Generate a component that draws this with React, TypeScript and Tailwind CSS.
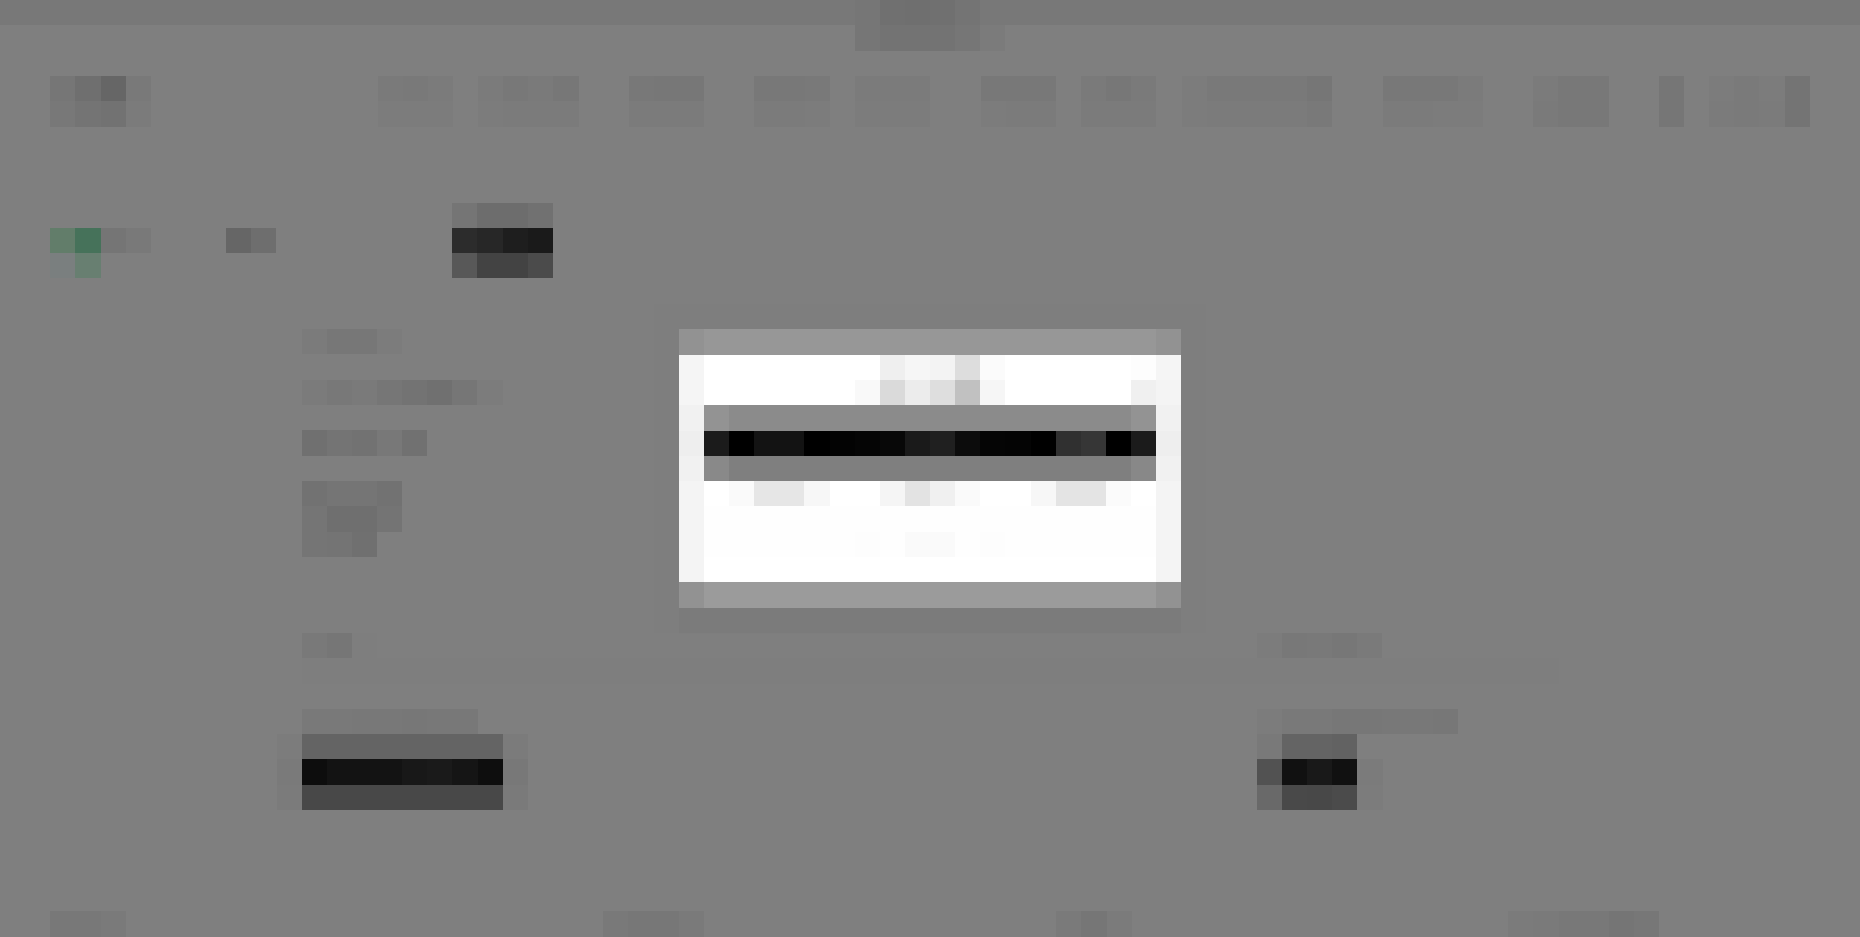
import React from 'react';

// The reference is blurred past reading, so everything is kept as the tone cells it shows, on its 25px grid.
const Line = ({ cells, className = '' }: { cells: string[]; className?: string }) => (
  <div className={`flex h-[25.32px] ${className}`}>
    {cells.map((tone, i) => (
      <div key={i} className={`w-[25.135px] shrink-0 ${tone}`} />
    ))}
  </div>
);

const fill = (count: number, tone: string) => Array<string>(count).fill(tone);

const navLinks = [
  { gap: '', top: ['bg-[#f4f4f4]', 'bg-[#f2f2f2]', 'bg-[#f6f6f6]'], bottom: ['bg-[#f8f8f8]', 'bg-[#f8f8f8]', 'bg-[#f8f8f8]'] },
  { gap: 'ml-[25.135px]', top: ['bg-[#f6f6f6]', 'bg-[#f0f0f0]', 'bg-[#f4f4f4]', 'bg-[#eeeeee]'], bottom: ['bg-[#f8f8f8]', 'bg-[#f6f6f6]', 'bg-[#f6f6f6]', 'bg-[#f6f6f6]'] },
  { gap: 'ml-[50.27px]', top: ['bg-[#f0f0f0]', 'bg-[#eeeeee]', 'bg-[#eeeeee]'], bottom: ['bg-[#f6f6f6]', 'bg-[#f6f6f6]', 'bg-[#f6f6f6]'] },
  { gap: 'ml-[50.27px]', top: ['bg-[#f0f0f0]', 'bg-[#f0f0f0]', 'bg-[#f2f2f2]'], bottom: ['bg-[#f6f6f6]', 'bg-[#f6f6f6]', 'bg-[#f8f8f8]'] },
  { gap: 'ml-[25.135px]', top: ['bg-[#f6f6f6]', 'bg-[#f6f6f6]', 'bg-[#f6f6f6]'], bottom: ['bg-[#f8f8f8]', 'bg-[#f8f8f8]', 'bg-[#f8f8f8]'] },
  { gap: 'ml-[50.27px]', top: ['bg-[#f0f0f0]', 'bg-[#f0f0f0]', 'bg-[#f0f0f0]'], bottom: ['bg-[#f8f8f8]', 'bg-[#f6f6f6]', 'bg-[#f6f6f6]'] },
  { gap: 'ml-[25.135px]', top: ['bg-[#f4f4f4]', 'bg-[#eeeeee]', 'bg-[#f4f4f4]'], bottom: ['bg-[#f6f6f6]', 'bg-[#f6f6f6]', 'bg-[#f6f6f6]'] },
  { gap: 'ml-[25.135px]', top: ['bg-[#f8f8f8]', 'bg-[#f2f2f2]', 'bg-[#f2f2f2]', 'bg-[#f2f2f2]', 'bg-[#f2f2f2]', 'bg-[#ececec]'], bottom: ['bg-[#f8f8f8]', 'bg-[#f6f6f6]', 'bg-[#f6f6f6]', 'bg-[#f6f6f6]', 'bg-[#f6f6f6]', 'bg-[#f2f2f2]'] },
  { gap: 'ml-[50.27px]', top: ['bg-[#f0f0f0]', 'bg-[#f0f0f0]', 'bg-[#f0f0f0]', 'bg-[#f6f6f6]'], bottom: ['bg-[#f6f6f6]', 'bg-[#f6f6f6]', 'bg-[#f8f8f8]', 'bg-[#f8f8f8]'] },
  { gap: 'ml-[50.27px]', top: ['bg-[#f6f6f6]', 'bg-[#f0f0f0]', 'bg-[#f0f0f0]'], bottom: ['bg-[#f4f4f4]', 'bg-[#f0f0f0]', 'bg-[#f0f0f0]'] },
  { gap: 'ml-[50.27px]', top: ['bg-[#ececec]'], bottom: ['bg-[#ececec]'] },
  { gap: 'ml-[25.135px]', top: ['bg-[#f8f8f8]', 'bg-[#f4f4f4]', 'bg-[#f8f8f8]', 'bg-[#e8e8e8]'], bottom: ['bg-[#f6f6f6]', 'bg-[#f4f4f4]', 'bg-[#f6f6f6]', 'bg-[#e8e8e8]'] },
];

const TopBar = () => (
  <div>
    <Line
      className="justify-center bg-[#f0f0f0]"
      cells={['bg-[#ececec]', 'bg-[#e0e0e0]', 'bg-[#dedede]', 'bg-[#e0e0e0]', 'bg-[#e8e8e8]', 'bg-[#f0f0f0]']}
    />
    <Line
      className="justify-center"
      cells={['bg-[#ececec]', 'bg-[#e6e6e6]', 'bg-[#e6e6e6]', 'bg-[#e6e6e6]', 'bg-[#ececec]', 'bg-[#f6f6f6]']}
    />
  </div>
);

const Nav = () => (
  <nav className="mt-[25.32px] flex justify-between pl-[50.27px] pr-[50.27px]">
    <div>
      <Line cells={['bg-[#ececec]', 'bg-[#dedede]', 'bg-[#cccccc]', 'bg-[#f2f2f2]']} />
      <Line cells={['bg-[#f0f0f0]', 'bg-[#e8e8e8]', 'bg-[#e4e4e4]', 'bg-[#f6f6f6]']} />
    </div>
    <div className="flex">
      {navLinks.map((link, i) => (
        <div key={i} className={link.gap}>
          <Line cells={link.top} />
          <Line cells={link.bottom} />
        </div>
      ))}
    </div>
  </nav>
);

const Hero = () => (
  <section className="mt-[75.96px] flex h-[75.96px] pl-[50.27px]">
    <div className="pt-[25.32px]">
      <Line cells={['bg-[#c4fad4]', 'bg-[#8ce4b4]', 'bg-[#eaeaea]', 'bg-[#f2f2f2]']} />
      <Line cells={['bg-[#f4ffff]', 'bg-[#d0fee2]']} />
    </div>
    <div className="ml-[75.4px] pt-[25.32px]">
      <Line cells={['bg-[#cccccc]', 'bg-[#dcdcdc]']} />
    </div>
    <button className="ml-[175.9px] block">
      <Line cells={['bg-[#eaeaea]', 'bg-[#dadada]', 'bg-[#dadada]', 'bg-[#e2e2e2]']} />
      <Line cells={['bg-[#585858]', 'bg-[#4e4e4e]', 'bg-[#3c3c3c]', 'bg-[#343434]']} />
      <Line cells={['bg-[#b0b0b0]', 'bg-[#868686]', 'bg-[#868686]', 'bg-[#969696]']} />
    </button>
  </section>
);

const Details = () => (
  <section className="mt-[50.64px] pl-[301.6px]">
    <Line cells={['bg-[#f6f6f6]', 'bg-[#eeeeee]', 'bg-[#eeeeee]', 'bg-[#f8f8f8]']} />
    <Line
      className="mt-[25.32px]"
      cells={['bg-[#f6f6f6]', 'bg-[#f0f0f0]', 'bg-[#f4f4f4]', 'bg-[#ececec]', 'bg-[#e6e6e6]', 'bg-[#e0e0e0]', 'bg-[#ececec]', 'bg-[#f8f8f8]']}
    />
    <Line
      className="mt-[25.32px]"
      cells={['bg-[#e0e0e0]', 'bg-[#e8e8e8]', 'bg-[#e4e4e4]', 'bg-[#f0f0f0]', 'bg-[#e2e2e2]']}
    />
    <div className="mt-[25.32px]">
      <Line cells={['bg-[#e4e4e4]', 'bg-[#eaeaea]', 'bg-[#eaeaea]', 'bg-[#e4e4e4]']} />
      <Line cells={['bg-[#eaeaea]', 'bg-[#dedede]', 'bg-[#dedede]', 'bg-[#e8e8e8]']} />
      <Line cells={['bg-[#eaeaea]', 'bg-[#e8e8e8]', 'bg-[#e0e0e0]']} />
    </div>
  </section>
);

const Fields = () => (
  <section className="mt-[76px] pl-[276.5px] pr-[301px]">
    <div className="grid grid-cols-[955.2px_1fr] pl-[25.135px]">
      <Line cells={['bg-[#f2f2f2]', 'bg-[#ececec]', 'bg-[#fcfcfc]']} />
      <Line cells={['bg-[#f8f8f8]', 'bg-[#f0f0f0]', 'bg-[#f2f2f2]', 'bg-[#eeeeee]', 'bg-[#f4f4f4]']} />
    </div>
    <div className="ml-[25.135px] h-[25.32px] bg-[#fdfdfd]" />
    <div className="mt-[25.32px] grid grid-cols-[955.2px_1fr] pl-[25.135px]">
      <Line cells={['bg-[#f2f2f2]', 'bg-[#f2f2f2]', 'bg-[#f0f0f0]', 'bg-[#f0f0f0]', 'bg-[#eeeeee]', 'bg-[#f0f0f0]', 'bg-[#f0f0f0]']} />
      <Line cells={['bg-[#f8f8f8]', 'bg-[#f2f2f2]', 'bg-[#f2f2f2]', 'bg-[#eeeeee]', 'bg-[#eeeeee]', 'bg-[#f0f0f0]', 'bg-[#f0f0f0]', 'bg-[#eeeeee]']} />
    </div>
    <div className="grid grid-cols-[980.4px_1fr]">
      <button className="block w-fit">
        <Line cells={['bg-[#f8f8f8]', ...fill(8, 'bg-[#c8c8c8]'), 'bg-[#f6f6f6]']} />
        <Line cells={['bg-[#f4f4f4]', 'bg-[#1a1a1a]', 'bg-[#262626]', 'bg-[#262626]', 'bg-[#262626]', 'bg-[#303030]', 'bg-[#343434]', 'bg-[#2a2a2a]', 'bg-[#1c1c1c]', 'bg-[#f0f0f0]']} />
        <Line cells={['bg-[#f6f6f6]', ...fill(8, 'bg-[#909090]'), 'bg-[#f4f4f4]']} />
      </button>
      <button className="block w-fit">
        <Line cells={['bg-[#f2f2f2]', 'bg-[#c8c8c8]', 'bg-[#c8c8c8]', 'bg-[#c4c4c4]']} />
        <Line cells={['bg-[#a4a4a4]', 'bg-[#222222]', 'bg-[#323232]', 'bg-[#222222]', 'bg-[#f6f6f6]']} />
        <Line cells={['bg-[#d2d2d2]', 'bg-[#929292]', 'bg-[#909090]', 'bg-[#969696]', 'bg-[#f8f8f8]']} />
      </button>
    </div>
  </section>
);

const Footer = () => (
  <footer className="mt-[101.3px] grid grid-cols-[553px_453px_452px_1fr] pl-[50.27px]">
    <Line cells={['bg-[#f0f0f0]', 'bg-[#f0f0f0]', 'bg-[#f4f4f4]']} />
    <Line cells={['bg-[#f2f2f2]', 'bg-[#eeeeee]', 'bg-[#eeeeee]', 'bg-[#f4f4f4]']} />
    <Line cells={['bg-[#f4f4f4]', 'bg-[#ececec]', 'bg-[#f6f6f6]']} />
    <Line cells={['bg-[#f6f6f6]', 'bg-[#f4f4f4]', 'bg-[#f0f0f0]', 'bg-[#f0f0f0]', 'bg-[#eaeaea]', 'bg-[#eeeeee]']} />
  </footer>
);

const Modal = () => (
  <div className="fixed inset-0 flex items-center justify-center bg-black/50">
    <div className="shadow-[0_25.3px_0_0_rgba(0,0,0,0.03),0_0_0_25px_rgba(0,0,0,0.012)]">
      <Line cells={['bg-[#929292]', ...fill(18, 'bg-[#979797]'), 'bg-[#929292]']} />
      <Line cells={['bg-[#f5f5f5]', ...fill(7, 'bg-white'), 'bg-[#efefef]', 'bg-[#f6f6f6]', 'bg-[#f3f3f3]', 'bg-[#dddddd]', 'bg-[#fbfbfb]', ...fill(5, 'bg-white'), 'bg-[#fdfdfd]', 'bg-[#f5f5f5]']} />
      <Line cells={['bg-[#f5f5f5]', ...fill(6, 'bg-white'), 'bg-[#f9f9f9]', 'bg-[#dadada]', 'bg-[#ececec]', 'bg-[#dedede]', 'bg-[#c1c1c1]', 'bg-[#f6f6f6]', ...fill(5, 'bg-white'), 'bg-[#f0f0f0]', 'bg-[#f4f4f4]']} />
      <button className="block">
        <Line cells={['bg-[#f1f1f1]', 'bg-[#939393]', ...fill(16, 'bg-[#8b8b8b]'), 'bg-[#939393]', 'bg-[#f1f1f1]']} />
        <Line cells={['bg-[#eeeeee]', 'bg-[#1b1b1b]', 'bg-black', 'bg-[#131313]', 'bg-[#131313]', 'bg-black', 'bg-[#030303]', 'bg-[#050505]', 'bg-[#080808]', 'bg-[#1a1a1a]', 'bg-[#202020]', 'bg-[#0c0c0c]', 'bg-[#050505]', 'bg-[#040404]', 'bg-black', 'bg-[#303030]', 'bg-[#363636]', 'bg-black', 'bg-[#1b1b1b]', 'bg-[#eeeeee]']} />
        <Line cells={['bg-[#f1f1f1]', 'bg-[#898989]', ...fill(16, 'bg-[#7f7f7f]'), 'bg-[#888888]', 'bg-[#f1f1f1]']} />
      </button>
      <Line cells={['bg-[#f4f4f4]', 'bg-white', 'bg-[#fafafa]', 'bg-[#e6e6e6]', 'bg-[#e6e6e6]', 'bg-[#f7f7f7]', 'bg-white', 'bg-white', 'bg-[#f5f5f5]', 'bg-[#e3e3e3]', 'bg-[#f0f0f0]', 'bg-[#fafafa]', 'bg-white', 'bg-white', 'bg-[#f7f7f7]', 'bg-[#e4e4e4]', 'bg-[#e4e4e4]', 'bg-[#fbfbfb]', 'bg-white', 'bg-[#f4f4f4]']} />
      <Line cells={['bg-[#f4f4f4]', ...fill(18, 'bg-[#fefefe]'), 'bg-[#f4f4f4]']} />
      <Line cells={['bg-[#f4f4f4]', ...fill(6, 'bg-[#fefefe]'), 'bg-[#fdfdfd]', 'bg-[#fefefe]', 'bg-[#fafafa]', 'bg-[#fafafa]', 'bg-[#fefefe]', 'bg-[#fdfdfd]', ...fill(6, 'bg-[#fefefe]'), 'bg-[#f4f4f4]']} />
      <Line cells={['bg-[#f4f4f4]', ...fill(18, 'bg-white'), 'bg-[#f4f4f4]']} />
      <Line cells={['bg-[#929292]', ...fill(18, 'bg-[#9b9b9b]'), 'bg-[#929292]']} />
    </div>
  </div>
);

const App: React.FC = () => (
  <div className="h-[937px] w-full overflow-hidden bg-white">
    <TopBar />
    <Nav />
    <Hero />
    <Details />
    <Fields />
    <Footer />
    <Modal />
  </div>
);

export default App;
